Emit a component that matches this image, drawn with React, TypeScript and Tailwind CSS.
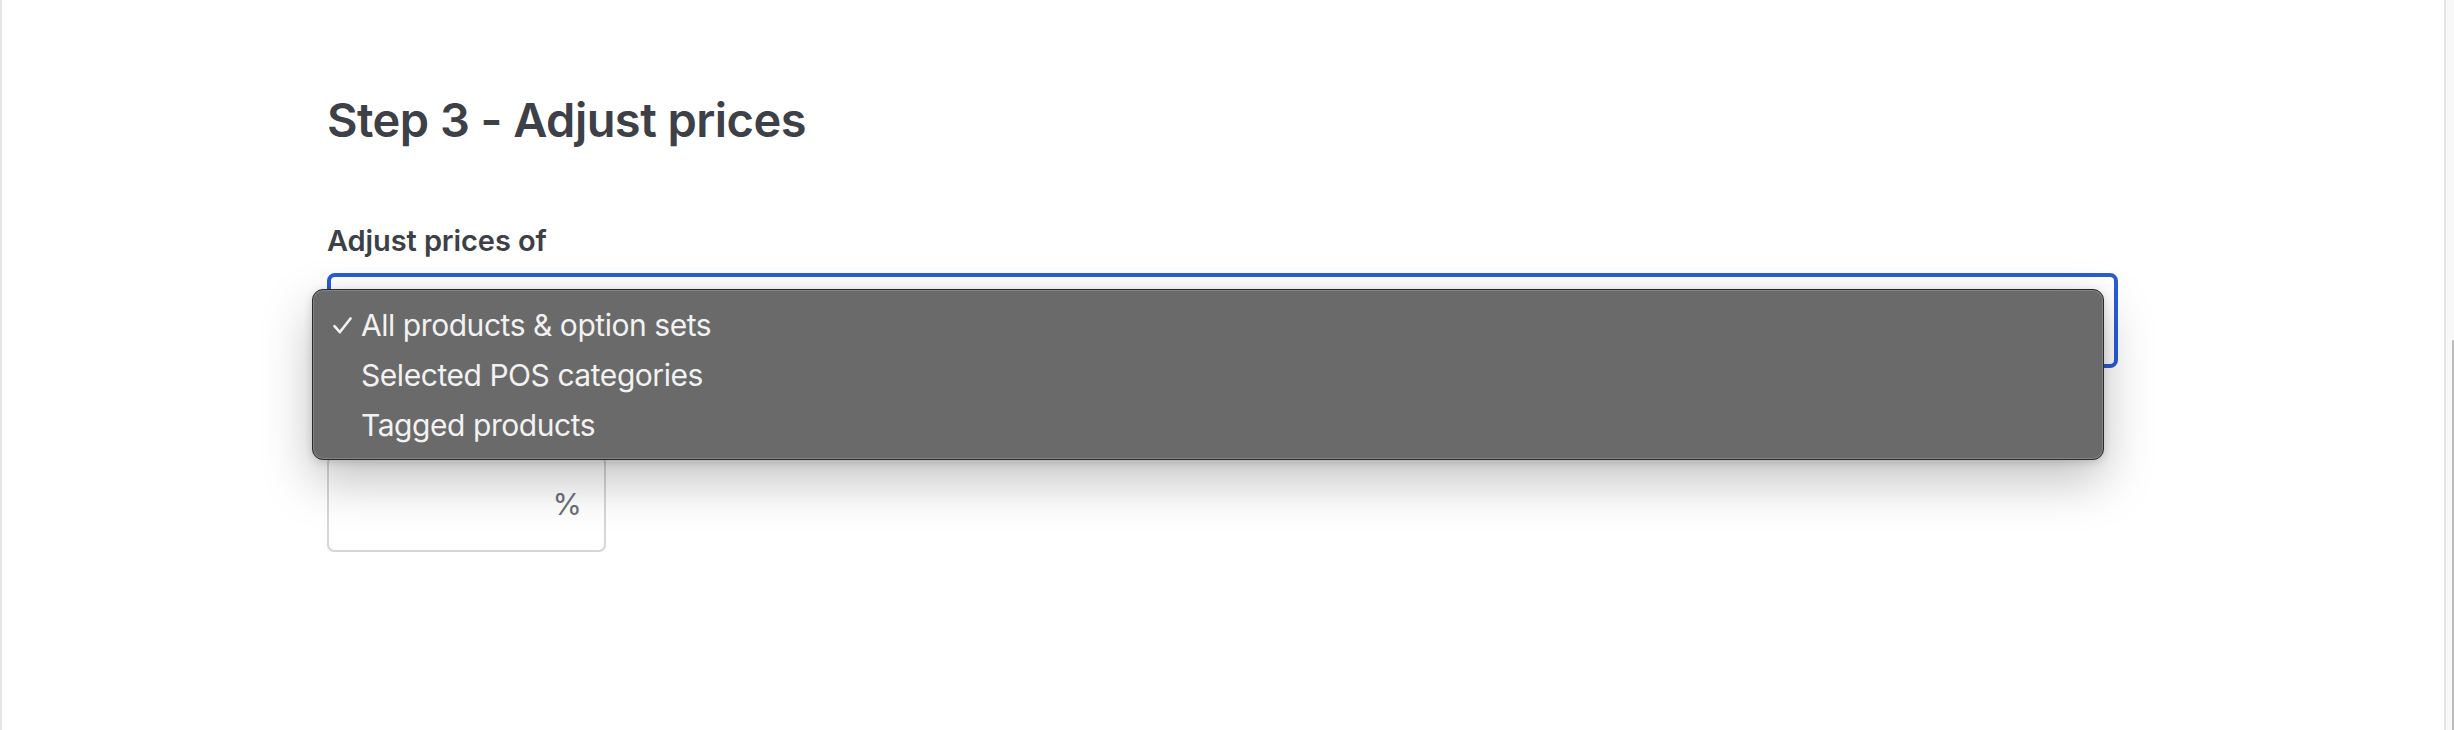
import React from "react";

const options = [
  { label: "All products & option sets", selected: true },
  { label: "Selected POS categories", selected: false },
  { label: "Tagged products", selected: false },
];

function Check() {
  return (
    <svg width="19" height="17" viewBox="0 0 19 17" fill="none" className="shrink-0">
      <path d="M1.5 9.2 L6.8 15.2 L17.5 1.5" stroke="#f2f2f2" strokeWidth="2.6" strokeLinecap="round" strokeLinejoin="round" />
    </svg>
  );
}

export default function App() {
  return (
    <div className="flex h-[730px] w-full bg-white overflow-hidden" style={{ fontFamily: "Inter, 'Noto Sans', sans-serif" }}>
      <div className="w-[2px] shrink-0 bg-[#e6e6e6]" />
      <main className="flex-1 pl-[325px] pr-[326px] pt-[96px]">
        <h1 className="text-[47px] leading-none font-semibold text-[#3d4046] tracking-[-0.55px]">Step 3 - Adjust prices</h1>
        <div className="mt-[83px] text-[29px] leading-none font-semibold text-[#3d4046] tracking-[-0.1px]">Adjust prices of</div>
        <div className="relative mt-[18px]">
          <div className="h-[95px] rounded-[8px] border-[4px] border-[#2a5bd6] bg-white" />
          <div className="absolute left-[-15px] top-[16px] w-[1792px] h-[171px] rounded-[11px] border border-[#2a2a2a] bg-[#6a6a6a] shadow-[inset_0_0_0_1px_rgba(255,255,255,0.18),0_20px_50px_rgba(0,0,0,0.25),0_2px_8px_rgba(0,0,0,0.15)] z-10 pt-[10px]">
            {options.map((o) => (
              <div key={o.label} className="flex h-[50px] items-center pl-[20px] text-[30px] leading-none text-[#f2f2f2]">
                <div className="w-[28px] flex items-center">{o.selected ? <Check /> : null}</div>
                <span className="tracking-[-0.45px]">{o.label}</span>
              </div>
            ))}
          </div>
        </div>
        <div className="mt-[88px] flex h-[96px] w-[279px] items-center justify-end rounded-[7px] border-2 border-[#d3d6da] pr-[22px]">
          <span className="text-[30px] leading-none text-[#6b7079]">%</span>
        </div>
      </main>
      <div className="w-[2px] shrink-0 bg-[#e4e4e4]" />
      <div className="flex w-[8px] shrink-0 flex-col bg-[#f8f8f8]">
        <div className="h-[340px]" />
        <div className="ml-[6px] flex-1 rounded-t-full bg-[#bdbdbd]" />
      </div>
    </div>
  );
}
